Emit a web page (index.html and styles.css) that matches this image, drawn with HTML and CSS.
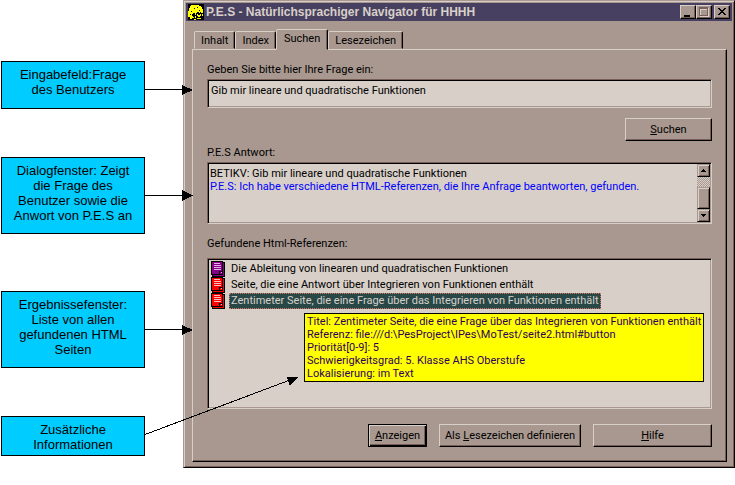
FILE: index.html
```html
<!DOCTYPE html>
<html lang="de">
<head>
<meta charset="utf-8">
<title>P.E.S - Natürlichsprachiger Navigator</title>
<link rel="stylesheet" href="styles.css">
</head>
<body>
<main class="figure">
  <aside class="notes">
    <p class="note note-input">Eingabefeld:Frage<br>des Benutzers</p>
    <p class="note note-dialog">Dialogfenster: Zeigt<br>die Frage des<br>Benutzer sowie die<br>Anwort von P.E.S an</p>
    <p class="note note-results">Ergebnissefenster:<br>Liste von allen<br>gefundenen HTML<br>Seiten</p>
    <p class="note note-info">Zusätzliche<br>Informationen</p>
  </aside>

  <section class="window">
    <header class="titlebar">
      <svg class="app-icon" viewBox="0 0 16 16" shape-rendering="crispEdges" aria-hidden="true">
        <path fill="#000" d="M0 0h16v16h-16z"/>
        <path fill="#ff0" d="M5 1h6v1h2v1h1v2h1v4h-2v-1h-1v1h-1v-1h-2v1h-1v2h-1v-2h-2v1h-1v2h1v1h1v1h-2v1h-2v-2h-2v-6h1v-3h1v-2h1v-1h2z"/>
        <path fill="#000" d="M6 4h1v1h-1zM9 3h1v1h-1zM3 7h1v1h-1zM11 6h1v1h-1zM2 10h1v1h-1z"/>
        <path fill="#ff0" d="M7 12h1v2h-1zM9 10h1v1h2v-1h1v2h-1v1h-2v-1h-1zM14 10h1v2h-1zM9 14h4v1h-4zM6 15h2v1h-2z"/>
      </svg>
      <h1 class="title">P.E.S - Natürlichsprachiger Navigator für HHHH</h1>
      <div class="caption-buttons">
        <button class="caption" type="button" aria-label="Minimieren"><svg viewBox="0 0 12 10" shape-rendering="crispEdges"><path d="M2 8h6v2h-6z"/></svg></button>
        <button class="caption" type="button" aria-label="Maximieren" disabled><svg viewBox="0 0 12 10" shape-rendering="crispEdges"><path fill="#d8d0c8" d="M2 1h9v9h-9zM3 3v6h7v-6z" fill-rule="evenodd"/><path fill="#786058" d="M1 0h9v9h-9zM2 2v6h7v-6z" fill-rule="evenodd"/></svg></button>
        <button class="caption caption-close" type="button" aria-label="Schließen"><svg viewBox="0 0 12 10" shape-rendering="crispEdges"><path d="M2 1h2v1h1v1h2v-1h1v-1h2v1h-1v1h-1v1h-1v1h1v1h1v1h1v1h-2v-1h-1v-1h-2v1h-1v1h-2v-1h1v-1h1v-1h1v-1h-1v-1h-1v-1h-1z"/></svg></button>
      </div>
    </header>

    <nav class="tabs" role="tablist">
      <button class="tab" type="button" role="tab">Inhalt</button>
      <button class="tab" type="button" role="tab">Index</button>
      <button class="tab tab-active" type="button" role="tab" aria-selected="true">Suchen</button>
      <button class="tab" type="button" role="tab">Lesezeichen</button>
    </nav>

    <form class="panel">
      <label class="label" for="question">Geben Sie bitte hier Ihre Frage ein:</label>
      <input class="sunken question" id="question" type="text" value="Gib mir lineare und quadratische Funktionen">
      <div class="search-row">
        <button class="button button-search" type="button"><span><u>S</u>uchen</span></button>
      </div>

      <h2 class="label label-answer">P.E.S Antwort:</h2>
      <div class="sunken answer">
        <div class="answer-text">
          <p>BETIKV: Gib mir lineare und quadratische Funktionen</p>
          <p class="reply">P.E.S: Ich habe verschiedene HTML-Referenzen, die Ihre Anfrage beantworten, gefunden.</p>
        </div>
        <div class="scrollbar">
          <button class="scroll-button" type="button" aria-label="Nach oben"><svg viewBox="0 0 5 3" shape-rendering="crispEdges"><path d="M2 0h1v1h1v1h1v1h-5v-1h1v-1h1z"/></svg></button>
          <div class="scroll-track"></div>
          <div class="scroll-thumb"></div>
          <button class="scroll-button" type="button" aria-label="Nach unten"><svg viewBox="0 0 5 3" shape-rendering="crispEdges"><path d="M0 0h5v1h-1v1h-1v1h-1v-1h-1v-1h-1z"/></svg></button>
        </div>
      </div>

      <h2 class="label label-results">Gefundene Html-Referenzen:</h2>
      <div class="sunken results">
        <ul class="list">
          <li class="item">
            <svg class="doc doc-visited" viewBox="0 0 14 16" shape-rendering="crispEdges" aria-hidden="true"><path d="M0 0h12v1h2v15h-13v-2h-1z"/><path class="page" d="M1 1h10v9h-3v3h-7zM12 2h1v13h-11v-1h10z"/><path class="page" d="M9 11h2v2h-2z"/><path class="rule" d="M3 2h6v1h-6zM3 4h7v1h-7zM3 6h7v1h-7zM3 8h7v1h-7zM10 11h1v1h-1z"/></svg>
            <span class="item-text">Die Ableitung von linearen und quadratischen Funktionen</span>
          </li>
          <li class="item">
            <svg class="doc" viewBox="0 0 14 16" shape-rendering="crispEdges" aria-hidden="true"><path d="M0 0h12v1h2v15h-13v-2h-1z"/><path class="page" d="M1 1h10v9h-3v3h-7zM12 2h1v13h-11v-1h10z"/><path class="page" d="M9 11h2v2h-2z"/><path class="rule" d="M3 2h6v1h-6zM3 4h7v1h-7zM3 6h7v1h-7zM3 8h7v1h-7zM10 11h1v1h-1z"/></svg>
            <span class="item-text">Seite, die eine Antwort über Integrieren von Funktionen enthält</span>
          </li>
          <li class="item">
            <svg class="doc" viewBox="0 0 14 16" shape-rendering="crispEdges" aria-hidden="true"><path d="M0 0h12v1h2v15h-13v-2h-1z"/><path class="page" d="M1 1h10v9h-3v3h-7zM12 2h1v13h-11v-1h10z"/><path class="page" d="M9 11h2v2h-2z"/><path class="rule" d="M3 2h6v1h-6zM3 4h7v1h-7zM3 6h7v1h-7zM3 8h7v1h-7zM10 11h1v1h-1z"/></svg>
            <span class="item-text item-selected">Zentimeter Seite, die eine Frage über das Integrieren von Funktionen enthält</span>
          </li>
        </ul>
        <div class="tooltip" role="tooltip">
          <p>Titel: Zentimeter Seite, die eine Frage über das Integrieren von Funktionen enthält</p>
          <p>Referenz: file:///d:\PesProject\IPes\MoTest/seite2.html#button</p>
          <p>Priorität[0-9]: 5</p>
          <p>Schwierigkeitsgrad: 5. Klasse AHS Oberstufe</p>
          <p>Lokalisierung: im Text</p>
        </div>
      </div>

      <div class="actions">
        <button class="button button-default" type="button"><span><u>A</u>nzeigen</span></button>
        <button class="button button-bookmark" type="button"><span>Als <u>L</u>esezeichen definieren</span></button>
        <button class="button button-help" type="button"><span><u>H</u>ilfe</span></button>
      </div>
    </form>
  </section>

  <svg class="arrows" width="300" height="460" viewBox="0 0 300 460" shape-rendering="crispEdges" aria-hidden="true">
    <path class="line" d="M145 89.5h40M145 195.5h40M145 329.5h40M145 434.500L290 380"/>
    <path d="M182 85l11 5l-11 5zM182 190l11 5.500l-11 5.500zM182 325l11 5l-11 5zM287 377l11 0l-8 9z"/>
  </svg>
</main>
</body>
</html>
```
FILE: styles.css
```css
:root {
  --face: #a8988f;
  --light: #d8d0c8;
  --dark: #786058;
  --title: #484060;
}

* {
  box-sizing: border-box;
}

body {
  margin: 0;
  background: #fff;
  color: #000;
  font: 11px/13px Roboto, "Liberation Sans", sans-serif;
}

p, h1, h2, ul {
  margin: 0;
  padding: 0;
}

button, input {
  font: inherit;
  color: inherit;
}

.figure {
  position: relative;
  display: grid;
  grid-template-columns: 183px 1fr;
  align-items: start;
}

/* Explanations beside the window */
.notes {
  display: flex;
  flex-direction: column;
  padding: 61px 38px 0 1px;
}

.note {
  border: 1px solid #000;
  background: #0cf;
  padding-top: 5px;
  font-family: "Liberation Sans", sans-serif;
  font-size: 13px;
  line-height: 15px;
  text-align: center;
  white-space: nowrap;
}

.note-input {
  min-height: 48px;
  margin-bottom: 48px;
}

.note-dialog {
  min-height: 77px;
  margin-bottom: 57px;
}

.note-results {
  min-height: 77px;
  margin-bottom: 48px;
}

.note-info {
  min-height: 40px;
}

.arrows {
  position: absolute;
  top: 0;
  left: 0;
  pointer-events: none;
}

.line {
  fill: none;
  stroke: #000;
}

/* Window frame */
.window {
  padding: 1px 7px 5px 8px;
  border: 1px solid;
  border-color: var(--face) #000 #000 var(--face);
  background: var(--face);
  box-shadow: inset 1px 1px var(--light), inset -1px -1px var(--dark);
}

.titlebar {
  display: flex;
  align-items: center;
  height: 18px;
  margin: 1px -5px 8px -6px;
  padding: 0 2px;
  background: var(--title);
  color: var(--light);
}

.app-icon {
  width: 16px;
  height: 16px;
}

.title {
  flex: 1;
  padding-left: 2px;
  font-family: "Liberation Sans", sans-serif;
  font-size: 12px;
  line-height: 16px;
  white-space: nowrap;
}

.caption-buttons {
  display: flex;
}

.caption {
  width: 16px;
  height: 14px;
  padding: 0 0 0 1px;
  border: 1px solid;
  border-color: var(--light) #000 #000 var(--light);
  background: var(--face);
  box-shadow: inset -1px -1px var(--dark);
}

.caption svg {
  display: block;
  width: 12px;
  height: 10px;
}

.caption-close {
  margin-left: 2px;
}

/* Tabs */
.tabs {
  display: flex;
  align-items: flex-end;
  height: 20px;
  padding-left: 2px;
}

.tab {
  height: 18px;
  padding: 0 6px;
  border: 1px solid;
  border-color: var(--light) #000 transparent var(--light);
  border-radius: 2px 2px 0 0;
  background: var(--face);
  box-shadow: inset -1px 0 var(--dark);
}

.tab-active {
  position: relative;
  height: 21px;
  margin-bottom: -1px;
  padding: 0 7px 3px;
}

.panel {
  padding: 13px 14px 14px;
  border: 1px solid;
  border-color: var(--light) #000 #000 var(--light);
  box-shadow: inset -1px -1px var(--dark);
}

.label {
  display: block;
  font-size: 11px;
  font-weight: normal;
  line-height: 13px;
}

.sunken {
  border: 1px solid;
  border-color: var(--dark) var(--light) var(--light) var(--dark);
  border-radius: 0;
  background: var(--light);
  box-shadow: inset 1px 1px #000, inset -1px -1px var(--face);
}

.question {
  display: block;
  width: 100%;
  height: 29px;
  margin: 3px 0 10px;
  padding: 0 3px 6px;
  outline: none;
}

/* Push buttons */
.button {
  height: 23px;
  padding: 0;
  border: 1px solid;
  border-color: var(--light) #000 #000 var(--light);
  background: var(--face);
  box-shadow: inset -1px -1px var(--dark);
  white-space: nowrap;
}

.search-row {
  display: flex;
  justify-content: flex-end;
}

.button-search {
  width: 87px;
}

.button-default {
  width: 59px;
  border-color: #000;
  box-shadow: inset 1px 1px var(--light), inset -1px -1px #000, inset -2px -2px var(--dark);
}

.button-bookmark {
  width: 142px;
}

.button-help {
  width: 119px;
}

.actions {
  display: flex;
  justify-content: flex-end;
  gap: 12px;
  margin-top: 15px;
}

/* Answer pane */
.label-answer {
  margin: 5px 0 3px;
}

.answer {
  display: flex;
  height: 62px;
  padding: 1px;
}

.answer-text {
  flex: 1;
  padding: 3px 1px;
  white-space: nowrap;
}

.reply {
  color: #00f;
}

.scrollbar {
  display: flex;
  flex-direction: column;
  width: 13px;
}

.scroll-button, .scroll-thumb {
  display: flex;
  align-items: center;
  justify-content: center;
  padding: 0;
  border: 1px solid;
  border-color: var(--face) #000 #000 var(--face);
  background: var(--face);
  box-shadow: inset 1px 1px var(--light), inset -1px -1px var(--dark);
}

.scroll-button {
  height: 13px;
}

.scroll-button svg {
  width: 5px;
  height: 3px;
}

.scroll-track {
  flex: 1;
  background: repeating-conic-gradient(var(--face) 0 25%, var(--light) 0 50%) 0 0 / 2px 2px;
}

.scroll-thumb {
  height: 22px;
}

/* Result list */
.label-results {
  margin: 13px 0 8px;
}

.results {
  position: relative;
  min-height: 151px;
  padding: 2px 3px;
}

.list {
  list-style: none;
}

.item {
  display: flex;
  align-items: center;
  height: 16px;
  white-space: nowrap;
}

.doc {
  width: 14px;
  height: 16px;
}

.page {
  fill: #f00;
}

.rule {
  fill: #f8c0c0;
}

.doc-visited .page {
  fill: #808;
}

.doc-visited .rule {
  fill: #e0b0e0;
}

.item-text {
  margin-left: 4px;
  padding: 1px;
  border: 1px solid transparent;
  line-height: 12px;
}

.item-selected {
  border: 1px dotted #d8785f;
  background: #284848;
  color: var(--light);
}

.tooltip {
  position: absolute;
  top: 54px;
  left: 96px;
  padding: 1px 2px;
  border: 1px solid #000;
  background: #ff0;
  color: #300058;
  white-space: nowrap;
}
```
